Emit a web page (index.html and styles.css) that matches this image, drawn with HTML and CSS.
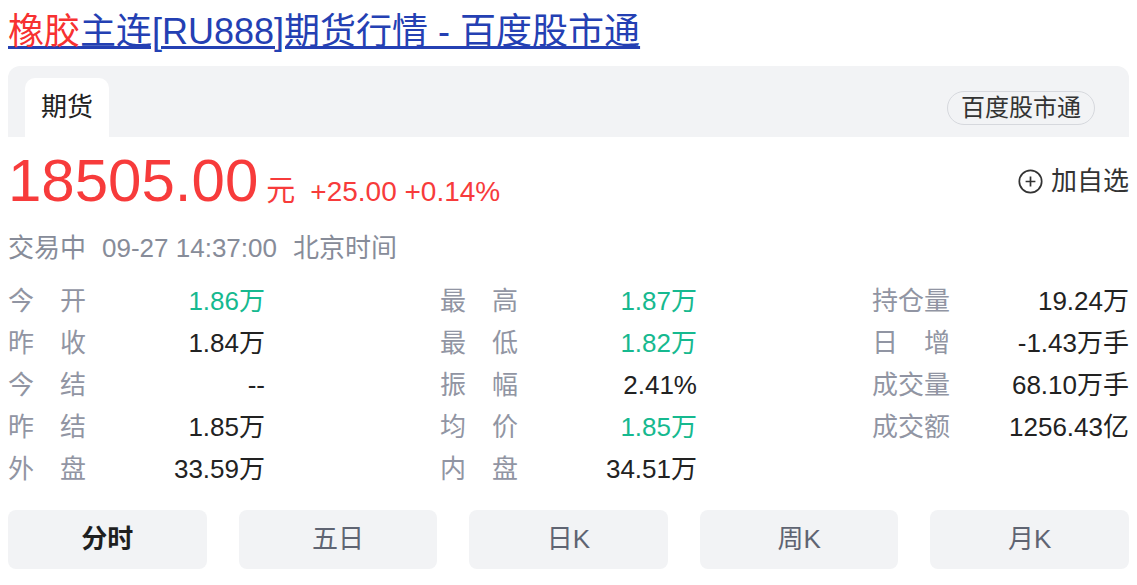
FILE: index.html
```html
<!DOCTYPE html>
<html lang="zh-CN">
<head>
<meta charset="utf-8">
<title>橡胶主连[RU888]期货行情 - 百度股市通</title>
<link rel="stylesheet" href="styles.css">
</head>
<body>
  <h1 class="title"><a href="#" class="title-link"><em class="hl">橡胶</em>主连[RU888]期货行情 - 百度股市通</a></h1>

  <div class="card-head">
    <div class="tab">期货</div>
    <div class="badge">百度股市通</div>
  </div>

  <div class="price-row">
    <span class="price">18505.00</span>
    <span class="unit">元</span>
    <span class="change">+25.00 +0.14%</span>
    <span class="fav">
      <svg class="fav-icon" width="25" height="25" viewBox="0 0 25 25">
        <circle cx="12.5" cy="12.5" r="11.2" fill="none" stroke="#333" stroke-width="1.7"/>
        <path d="M12.5 7.6v9.8M7.6 12.5h9.8" stroke="#333" stroke-width="1.7" fill="none"/>
      </svg>
      <span>加自选</span>
    </span>
  </div>

  <div class="status">
    <span>交易中</span>
    <span>09-27 14:37:00</span>
    <span>北京时间</span>
  </div>

  <div class="stats">
    <div class="col">
      <div class="row"><span class="label">今开</span><span class="val green">1.86万</span></div>
      <div class="row"><span class="label">昨收</span><span class="val">1.84万</span></div>
      <div class="row"><span class="label">今结</span><span class="val">--</span></div>
      <div class="row"><span class="label">昨结</span><span class="val">1.85万</span></div>
      <div class="row"><span class="label">外盘</span><span class="val">33.59万</span></div>
    </div>
    <div class="col">
      <div class="row"><span class="label">最高</span><span class="val green">1.87万</span></div>
      <div class="row"><span class="label">最低</span><span class="val green">1.82万</span></div>
      <div class="row"><span class="label">振幅</span><span class="val">2.41%</span></div>
      <div class="row"><span class="label">均价</span><span class="val green">1.85万</span></div>
      <div class="row"><span class="label">内盘</span><span class="val">34.51万</span></div>
    </div>
    <div class="col">
      <div class="row"><span class="label">持仓量</span><span class="val">19.24万</span></div>
      <div class="row"><span class="label">日增</span><span class="val">-1.43万手</span></div>
      <div class="row"><span class="label">成交量</span><span class="val">68.10万手</span></div>
      <div class="row"><span class="label">成交额</span><span class="val">1256.43亿</span></div>
    </div>
  </div>

  <div class="btns">
    <div class="btn active">分时</div>
    <div class="btn">五日</div>
    <div class="btn">日K</div>
    <div class="btn">周K</div>
    <div class="btn">月K</div>
  </div>
</body>
</html>
```
FILE: styles.css
```css
html, body {
  background: #fff;
}
body {
  margin: 8px;
  font-family: "Liberation Sans", Arial, "Noto Sans CJK SC", sans-serif;
  color: #222;
}
.title {
  margin: 4px 0 14px;
  font-size: 36px;
  font-weight: normal;
  line-height: 40px;
  white-space: nowrap;
}
.title-link {
  color: #2440b3;
  text-decoration: underline;
}
.hl {
  font-style: normal;
  color: #f73131;
}
.card-head {
  height: 71px;
  box-sizing: border-box;
  background: #f2f3f5;
  border-radius: 12px 12px 0 0;
  padding: 12px 34px 0 17px;
  display: flex;
  justify-content: space-between;
}
.tab {
  align-self: flex-end;
  height: 59px;
  box-sizing: border-box;
  padding: 0 16px;
  background: #fff;
  border-radius: 10px 10px 0 0;
  font-size: 26px;
  line-height: 58px;
  color: #222;
}
.badge {
  align-self: center;
  height: 34px;
  box-sizing: border-box;
  padding: 0 13px;
  border: 1.5px solid #d6d8dd;
  border-radius: 17px;
  font-size: 24px;
  line-height: 31px;
  color: #333;
}
.price-row {
  margin-top: 11px;
  height: 66px;
  display: flex;
  align-items: baseline;
  color: #f73b3b;
}
.price {
  font-size: 60px;
  line-height: 66px;
}
.unit {
  font-size: 29px;
  margin-left: 8px;
}
.change {
  font-size: 28px;
  margin-left: 15px;
}
.fav {
  margin-left: auto;
  align-self: center;
  display: flex;
  align-items: center;
  gap: 8px;
  font-size: 26px;
  line-height: 32px;
  color: #333;
}
.fav-icon {
  display: block;
}
.status {
  margin-top: 16px;
  display: flex;
  gap: 16px;
  font-size: 26px;
  line-height: 36px;
  color: #878c99;
}
.stats {
  margin-top: 14px;
  display: flex;
  justify-content: space-between;
}
.col {
  width: 257px;
}
.row {
  height: 42px;
  display: flex;
  justify-content: space-between;
  font-size: 26px;
  line-height: 42px;
}
.label {
  width: 78px;
  color: #9195a3;
  text-align: justify;
  text-align-last: justify;
  text-justify: inter-character;
}
.val {
  color: #222;
  text-align: right;
}
.green {
  color: #16b98f;
}
.btns {
  margin-top: 20px;
  display: grid;
  grid-template-columns: repeat(5, 1fr);
  gap: 32px;
}
.btn {
  height: 59px;
  border-radius: 8px;
  background: #f2f3f5;
  font-size: 26px;
  line-height: 59px;
  text-align: center;
  color: #5f6472;
}
.btn.active {
  font-weight: bold;
  color: #1f1f1f;
}
```
